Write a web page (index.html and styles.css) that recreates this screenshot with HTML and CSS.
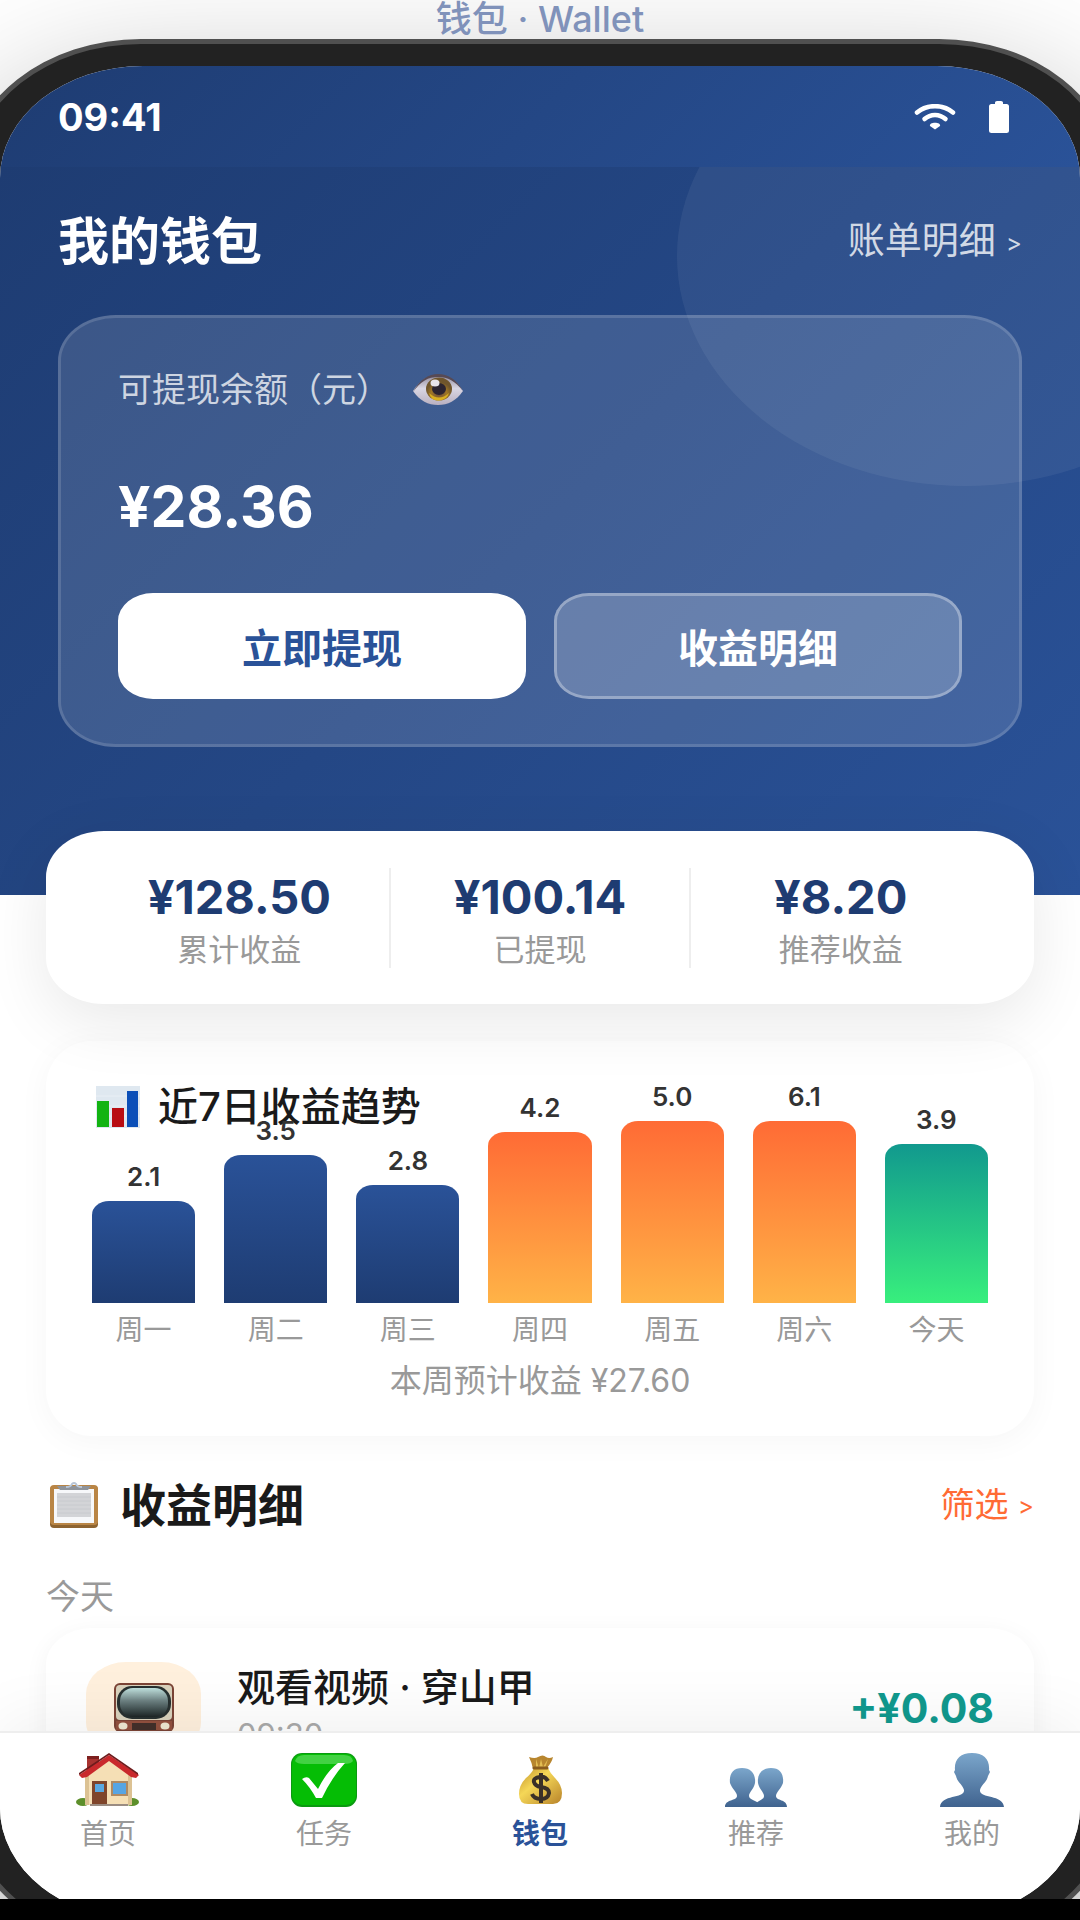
FILE: index.html
```
<!doctype html>
<html lang="zh-CN">
<head>
    <meta charset="UTF-8">
    <meta name="viewport" content="width=device-width, initial-scale=1.0">
    <title>钱包 · Wallet</title>
    <link rel="stylesheet" href="styles.css">
</head>
<body>
<div class="stage">
    <div class="stage-label">钱包 · Wallet</div>
    <div class="phone">
        <div class="screen">
            <div class="status-bar">
                <span>09:41</span>
                <div class="status-icons">
                    <svg width="42" height="26" viewBox="0 0 42 26" fill="none" stroke="#fff" stroke-width="4.500" stroke-linecap="round">
                        <path d="M3 8.500C13 0 29 0 39 8.500"/>
                        <path d="M10.500 15c6-5.500 15-5.500 21 0"/>
                        <path d="M21 25.500l-5-3.500c-1.500-4.500 11.500-4.500 10 0z" fill="#fff" stroke="none"/>
                    </svg>
                    <svg width="22" height="34" viewBox="0 0 22 34" fill="#fff">
                        <path d="M7 4V2.500Q7 1 9 1h4q2 0 2 1.500V4h3.500Q21 4 21 6.500V31q0 2-2.500 2h-15Q1 33 1 31V6.500Q1 4 3.500 4z"/>
                    </svg>
                </div>
            </div>

            <div class="content">
                <div class="wallet-header">
                    <div class="header-row">
                        <h1>我的钱包</h1>
                        <a href="#">账单明细 <span class="arrow">&gt;</span></a>
                    </div>
                    <div class="balance-card">
                        <div class="balance-label">
                            <span>可提现余额（元）</span>
                            <button class="eye-btn" type="button" aria-label="显示余额">
                                <svg width="52" height="34" viewBox="0 0 52 34">
                                    <defs>
                                        <linearGradient id="eyeWhite" x1="0" y1="0" x2="0" y2="1"><stop offset="0" stop-color="#8e8799"/><stop offset=".45" stop-color="#d9d6e3"/><stop offset="1" stop-color="#b9b0c0"/></linearGradient>
                                        <radialGradient id="iris" cy=".7"><stop offset="0" stop-color="#6b4b3c"/><stop offset=".6" stop-color="#a07726"/><stop offset="1" stop-color="#6f552c"/></radialGradient>
                                    </defs>
                                    <path d="M1 18C9 6 17 2 26 2c10 0 18 5 25 16-7 10-15 14-25 14S8 28 1 18z" fill="url(#eyeWhite)"/>
                                    <path d="M1 19C8 6 17 1 26 1c10 0 18 5 25 17C43 8 36 4 26 4S9 8 1 19z" fill="#574a55"/>
                                    <ellipse cx="27" cy="16" rx="13" ry="11.500" fill="url(#iris)"/>
                                    <path d="M17 20q10 9 20 0-2 7-10 7.500T17 20z" fill="#d9b021"/>
                                    <ellipse cx="27" cy="16" rx="7" ry="6" fill="#2c2430"/>
                                    <ellipse cx="23" cy="10" rx="4.500" ry="3.500" fill="#e8e4ea"/>
                                </svg>
                            </button>
                        </div>
                        <div class="balance-amount">¥28.36</div>
                        <div class="balance-actions">
                            <button class="btn btn-primary" type="button">立即提现</button>
                            <button class="btn btn-ghost" type="button">收益明细</button>
                        </div>
                    </div>
                </div>

                <div class="stats">
                    <div class="stat"><strong>¥128.50</strong><span>累计收益</span></div>
                    <div class="stat"><strong>¥100.14</strong><span>已提现</span></div>
                    <div class="stat"><strong>¥8.20</strong><span>推荐收益</span></div>
                </div>

                <div class="trend">
                    <h2>
                        <svg width="44" height="42" viewBox="0 0 44 42">
                            <path fill="#dfe8f0" d="M0 0h44v42H0z"/>
                            <path stroke="#e9eff5" d="M0 10h44M0 20h44M0 30h44"/>
                            <path fill="#12b312" d="M1 15h12v26H1z"/>
                            <path fill="#b80d12" d="M16 22h12v19H16z"/>
                            <path fill="#0b4fb8" d="M31 5h11v36H31z"/>
                        </svg>
                        近7日收益趋势
                    </h2>
                    <div class="chart">
                        <div class="col"><span>2.1</span><div class="bar" style="height: 102px"></div><em>周一</em></div>
                        <div class="col"><span>3.5</span><div class="bar" style="height: 148px"></div><em>周二</em></div>
                        <div class="col"><span>2.8</span><div class="bar" style="height: 118px"></div><em>周三</em></div>
                        <div class="col"><span>4.2</span><div class="bar bar-high" style="height: 171px"></div><em>周四</em></div>
                        <div class="col"><span>5.0</span><div class="bar bar-high" style="height: 182px"></div><em>周五</em></div>
                        <div class="col"><span>6.1</span><div class="bar bar-high" style="height: 182px"></div><em>周六</em></div>
                        <div class="col"><span>3.9</span><div class="bar bar-today" style="height: 159px"></div><em>今天</em></div>
                    </div>
                    <p class="trend-sum">本周预计收益 ¥27.60</p>
                </div>

                <div class="detail">
                    <div class="detail-head">
                        <h2>
                            <svg width="52" height="48" viewBox="0 0 52 48">
                                <rect x="2" y="5" width="48" height="42" rx="4" fill="#8d6330"/>
                                <rect x="2" y="4" width="48" height="40" rx="4" fill="#b98545"/>
                                <path fill="#f7f8fa" d="M6 8h40v34H6z"/>
                                <path fill="#d3d4d7" d="M9 12h34v24H9z"/>
                                <path stroke="#c8cace" d="M9 16h34M9 20h34M9 24h34M9 28h34M9 32h34"/>
                                <path fill="#8f949b" d="M9 5h34l-3 4H12z"/>
                                <path fill="none" stroke="#b8c6d8" stroke-width="2" d="M18 6q5 0 6-3 2-2 4 0 1 3 6 3"/>
                            </svg>
                            收益明细
                        </h2>
                        <a href="#">筛选 <span class="arrow">&gt;</span></a>
                    </div>
                    <div class="day">今天</div>
                    <div class="list">
                        <div class="item">
                            <div class="item-icon">
                                <svg width="62" height="52" viewBox="0 0 62 52">
                                    <defs><linearGradient id="tv" x1="0" y1="0" x2="0" y2="1"><stop offset="0" stop-color="#bfe0dd"/><stop offset=".45" stop-color="#6b7f80"/><stop offset="1" stop-color="#1d2626"/></linearGradient></defs>
                                    <rect x="1" y="1" width="60" height="49" rx="6" fill="#7b4436"/>
                                    <rect x="3" y="3" width="56" height="35" rx="4" fill="#d9d2bd"/>
                                    <rect x="4" y="4" width="54" height="33" rx="15" fill="#273030"/>
                                    <rect x="7" y="6" width="48" height="29" rx="13" fill="url(#tv)"/>
                                    <path fill="#93513f" d="M3 39h56v9H3z"/>
                                    <path fill="#43302b" d="M19 41h24v7H19z"/>
                                    <ellipse cx="10" cy="44" rx="4.500" ry="3.500" fill="#efe9d2"/>
                                    <ellipse cx="52" cy="44" rx="4.500" ry="3.500" fill="#efe9d2"/>
                                </svg>
                            </div>
                            <div class="item-info">
                                <div class="item-title">观看视频 · 穿山甲</div>
                                <div class="item-time">09:30</div>
                            </div>
                            <div class="item-amount">+¥0.08</div>
                        </div>
                    </div>
                </div>
            </div>

            <nav class="tabs">
                <a href="#">
                    <svg width="68" height="56" viewBox="0 0 68 56">
                        <ellipse cx="9" cy="50" rx="7" ry="4" fill="#5d8f2b"/>
                        <ellipse cx="58" cy="50" rx="7" ry="4" fill="#5d8f2b"/>
                        <path fill="#a83230" d="M13 4h12v14H13z"/>
                        <path fill="#7d201f" d="M13 4h12v3H13z"/>
                        <path fill="#f5dfb5" d="M11 24L34 7l24 17v29H11z"/>
                        <path fill="#dcc293" d="M11 24l4-3v32h-4zM54 21l4 3v29h-4z"/>
                        <path fill="#c9292c" d="M35 3L5 23l3 3 5-1L35 9l22 16 5 1 3-3z"/>
                        <path fill="#6e1b1c" d="M35 3L5 23v-2L35 1l29 20v2z"/>
                        <path fill="#7f452b" d="M18 29h15v24H18z"/>
                        <path fill="#5aa7e0" d="M21 32h9v8h-9z"/>
                        <path fill="#b08a62" d="M37 29h17v15H37z"/>
                        <path fill="#57a5e3" d="M39 31h13v11H39z"/>
                        <path fill="#9a8c82" d="M16 52h38v2H16z"/>
                    </svg>
                    首页
                </a>
                <a href="#">
                    <svg width="68" height="56" viewBox="0 0 68 56">
                        <rect x="1" y="1" width="66" height="54" rx="11" fill="#0a9a10"/>
                        <rect x="2" y="2" width="64" height="51" rx="10" fill="#05bd05"/>
                        <path fill="#6be06c" opacity=".6" d="M5 9q2-6 9-6h40q8 0 9 6-2 3-9 3H14q-7 0-9-3z"/>
                        <path fill="#fff" d="M12 27q4-3 7-1l9 11q9-18 20-26h7Q42 25 32 46h-6Q20 35 12 27z"/>
                    </svg>
                    任务
                </a>
                <a class="active" href="#">
                    <svg width="68" height="56" viewBox="0 0 68 56">
                        <defs><linearGradient id="bag" x1="0" y1="0" x2="1" y2="1"><stop offset="0" stop-color="#c08f2a"/><stop offset=".4" stop-color="#f5d757"/><stop offset="1" stop-color="#b8832a"/></linearGradient></defs>
                        <path fill="#b8862f" d="M23 5q6 2 9 0 5-3 8 0 3 2 7 0-1 5-6 11l-14 1q-1-6-4-12z"/>
                        <path fill="#e3bd52" d="M30 7l3 9 2-9 2 8 5-8-3 9-9 1z"/>
                        <path fill="url(#bag)" d="M28 16h14q2 5 7 10 7 7 7 15 0 11-9 11H22q-9 0-9-10 0-9 7-16 6-5 8-10z"/>
                        <path stroke="#8a5c1e" stroke-width="3" stroke-linecap="round" d="M28 16h13"/>
                        <path fill="none" stroke="#3a3028" stroke-width="4" d="M42 29q-3-5-8-4-7 1-6 5 1 4 7 5 8 1 8 6-1 6-8 6-7 0-9-5M35 21v30"/>
                    </svg>
                    钱包
                </a>
                <a href="#">
                    <svg width="68" height="56" viewBox="0 0 68 56">
                        <defs><linearGradient id="person" x1="0" y1="0" x2="0" y2="1"><stop offset="0" stop-color="#7ba6cb"/><stop offset="1" stop-color="#40638f"/></linearGradient></defs>
                        <path fill="url(#person)" d="M20 16c9 0 14 6 13 15-1 6-6 9-6 13 0 5 11 4 11 11H3c0-8 12-6 12-11 0-4-5-7-7-13-1-9 3-15 12-15z"/>
                        <path fill="url(#person)" d="M49 16c-9 0-14 6-13 15 1 6 6 9 6 13 0 5-9 4-9 11h32c0-8-11-6-11-11 0-4 5-7 7-13 1-9-3-15-12-15z"/>
                    </svg>
                    推荐
                </a>
                <a href="#">
                    <svg width="68" height="56" viewBox="0 0 68 56">
                        <path fill="url(#person)" d="M34 1c12 0 18 7 17 17l1 2-2 4c-1 6-7 9-8 14-1 9 23 4 24 17H2c1-13 25-8 24-17-1-5-7-8-8-14l-2-4 1-2C16 8 22 1 34 1z"/>
                    </svg>
                    我的
                </a>
            </nav>
        </div>
    </div>
</div>
</body>
</html>
```
FILE: styles.css
```
* {
    box-sizing: border-box;
    margin: 0;
    padding: 0;
}

body {
    background: #000;
    font-family: Inter, "Noto Sans CJK SC", sans-serif;
    color: #1a1a1a;
}

a {
    text-decoration: none;
}

button {
    font-family: inherit;
    border: none;
}

.stage {
    display: flex;
    flex-direction: column;
    height: calc(100vh - 21px);
    overflow: hidden;
    background: #fff;
}

.stage-label {
    height: 39px;
    line-height: 39px;
    flex-shrink: 0;
    text-align: center;
    font-size: 36px;
    font-weight: 500;
    color: #8092ba;
    z-index: 1;
}

/* 手机外壳，左右超出窗口 */
.phone {
    flex: 1;
    min-height: 0;
    margin: 0 -34px -48px;
    padding: 22px 29px;
    background: #222;
    border: 5px solid #505050;
    border-radius: 175px / 138px;
    box-shadow: 0 46px 140px rgba(0, 0, 0, 0.3);
}

.screen {
    display: flex;
    flex-direction: column;
    height: 100%;
    overflow: hidden;
    background: #fff;
    border-radius: 143px / 112px;
}

.status-bar {
    display: flex;
    flex-shrink: 0;
    justify-content: space-between;
    align-items: center;
    height: 101px;
    padding: 0 70px 0 58px;
    font-size: 38px;
    font-weight: 700;
    color: #fff;
    background: linear-gradient(135deg, #1e3c72, #2a5298);
}

.status-icons {
    display: flex;
    align-items: center;
    gap: 32px;
}

.content {
    flex: 1;
    min-height: 0;
    overflow: hidden;
}

.wallet-header {
    position: relative;
    overflow: hidden;
    padding: 45px 58px 148px;
    color: #fff;
    background: linear-gradient(135deg, #1e3c72, #2a5298);
}

.wallet-header::before {
    content: "";
    position: absolute;
    top: -141px;
    right: -173px;
    width: 576px;
    height: 460px;
    border-radius: 50%;
    background: rgba(255, 255, 255, 0.06);
}

.header-row {
    position: relative;
    display: flex;
    justify-content: space-between;
    align-items: center;
    height: 60px;
    margin-bottom: 43px;
}

.header-row h1 {
    font-size: 51px;
    font-weight: 700;
    line-height: 60px;
}

.header-row a {
    font-size: 37px;
    line-height: 60px;
    color: rgba(255, 255, 255, 0.8);
}

.arrow {
    font-size: 24px;
    vertical-align: 3px;
}

.balance-card {
    position: relative;
    padding: 52px 57px 45px;
    background: rgba(255, 255, 255, 0.13);
    background-clip: padding-box;
    border: 3px solid rgba(255, 255, 255, 0.25);
    border-radius: 58px / 46px;
}

.balance-label {
    display: flex;
    align-items: center;
    gap: 22px;
    height: 40px;
    font-size: 34px;
    line-height: 40px;
    color: rgba(255, 255, 255, 0.75);
}

.eye-btn {
    display: flex;
    background: none;
}

.balance-amount {
    margin: 65px 0 54px;
    font-size: 57px;
    font-weight: 700;
    line-height: 64px;
}

.balance-actions {
    display: flex;
    gap: 28px;
}

.btn {
    flex: 1;
    height: 106px;
    font-size: 40px;
    font-weight: 700;
    border-radius: 35px / 28px;
}

.btn-primary {
    color: #2a5298;
    background: #fff;
    border: 3px solid #fff;
}

.btn-ghost {
    color: #fff;
    background: rgba(255, 255, 255, 0.2);
    background-clip: padding-box;
    border: 3px solid rgba(255, 255, 255, 0.45);
}

.stats {
    position: relative;
    display: flex;
    margin: -64px 46px 0;
    padding: 37px 44px 36px;
    background: #fff;
    border-radius: 58px / 46px;
    box-shadow: 0 18px 64px rgba(0, 0, 0, 0.09);
}

.stat {
    display: flex;
    flex: 1;
    flex-direction: column;
    gap: 10px;
    padding-top: 4px;
    text-align: center;
    border-right: 2px solid #eee;
}

.stat:last-child {
    border-right: none;
}

.stat strong {
    font-size: 47px;
    font-weight: 700;
    line-height: 50px;
    color: #1e3c72;
}

.stat span {
    font-size: 31px;
    line-height: 36px;
    color: #999;
}

.trend {
    margin: 37px 46px 0;
    padding: 38px 46px 35px;
    border-radius: 46px;
    box-shadow: 0 5px 32px rgba(0, 0, 0, 0.04);
}

.trend h2 {
    display: flex;
    align-items: center;
    gap: 18px;
    padding-left: 4px;
    font-size: 40px;
    font-weight: 500;
    line-height: 56px;
}

.chart {
    display: flex;
    gap: 29px;
    height: 211px;
}

/* 柱子从底部向上生长 */
.col {
    display: flex;
    flex: 1;
    flex-direction: column;
    justify-content: flex-end;
    text-align: center;
}

.col span {
    margin-bottom: 9px;
    font-size: 26px;
    font-weight: 600;
    line-height: 30px;
    color: #333;
}

.col em {
    margin-top: 11px;
    font-size: 28px;
    font-style: normal;
    line-height: 32px;
    color: #999;
}

.bar {
    flex-shrink: 0;
    border-radius: 17px 17px 0 0 / 14px 14px 0 0;
    background: linear-gradient(180deg, #2a5298, #1e3c72);
}

.bar-high {
    background: linear-gradient(180deg, #ff6b35, #ffb347);
}

.bar-today {
    background: linear-gradient(180deg, #11998e, #38ef7d);
}

.trend-sum {
    margin-top: 15px;
    font-size: 32px;
    line-height: 40px;
    text-align: center;
    color: #999;
}

.detail {
    margin: 39px 46px 0;
}

.detail-head {
    display: flex;
    justify-content: space-between;
    align-items: center;
    height: 60px;
}

.detail-head h2 {
    display: flex;
    align-items: center;
    gap: 20px;
    padding-left: 2px;
    font-size: 46px;
    font-weight: 700;
    line-height: 60px;
}

.detail-head a {
    font-size: 34px;
    line-height: 60px;
    color: #ff6b35;
}

.day {
    margin: 42px 0 11px;
    font-size: 34px;
    line-height: 40px;
    color: #999;
}

.list {
    padding: 34px 40px;
    border-radius: 46px / 37px;
    box-shadow: 0 5px 24px rgba(0, 0, 0, 0.05);
}

.item {
    display: flex;
    align-items: center;
    gap: 36px;
}

.item-icon {
    display: flex;
    justify-content: center;
    align-items: center;
    width: 115px;
    height: 92px;
    background: #fff0dd;
    border-radius: 40px / 32px;
}

.item-info {
    flex: 1;
}

.item-title {
    font-size: 38px;
    font-weight: 500;
    line-height: 48px;
}

.item-time {
    margin-top: 6px;
    font-size: 31px;
    line-height: 36px;
    color: #aaa;
}

.item-amount {
    font-size: 41px;
    font-weight: 700;
    color: #11998e;
}

.tabs {
    position: relative;
    display: flex;
    flex-shrink: 0;
    height: 189px;
    padding-top: 19px;
    background: #fff;
    border-top: 2px solid #eee;
    box-shadow: 0 -12px 60px rgba(0, 0, 0, 0.06);
}

.tabs a {
    display: flex;
    flex: 1;
    flex-direction: column;
    align-items: center;
    gap: 8px;
    font-size: 28px;
    line-height: 36px;
    color: #999;
}

.tabs .active {
    font-weight: 700;
    color: #2a5298;
}
```
